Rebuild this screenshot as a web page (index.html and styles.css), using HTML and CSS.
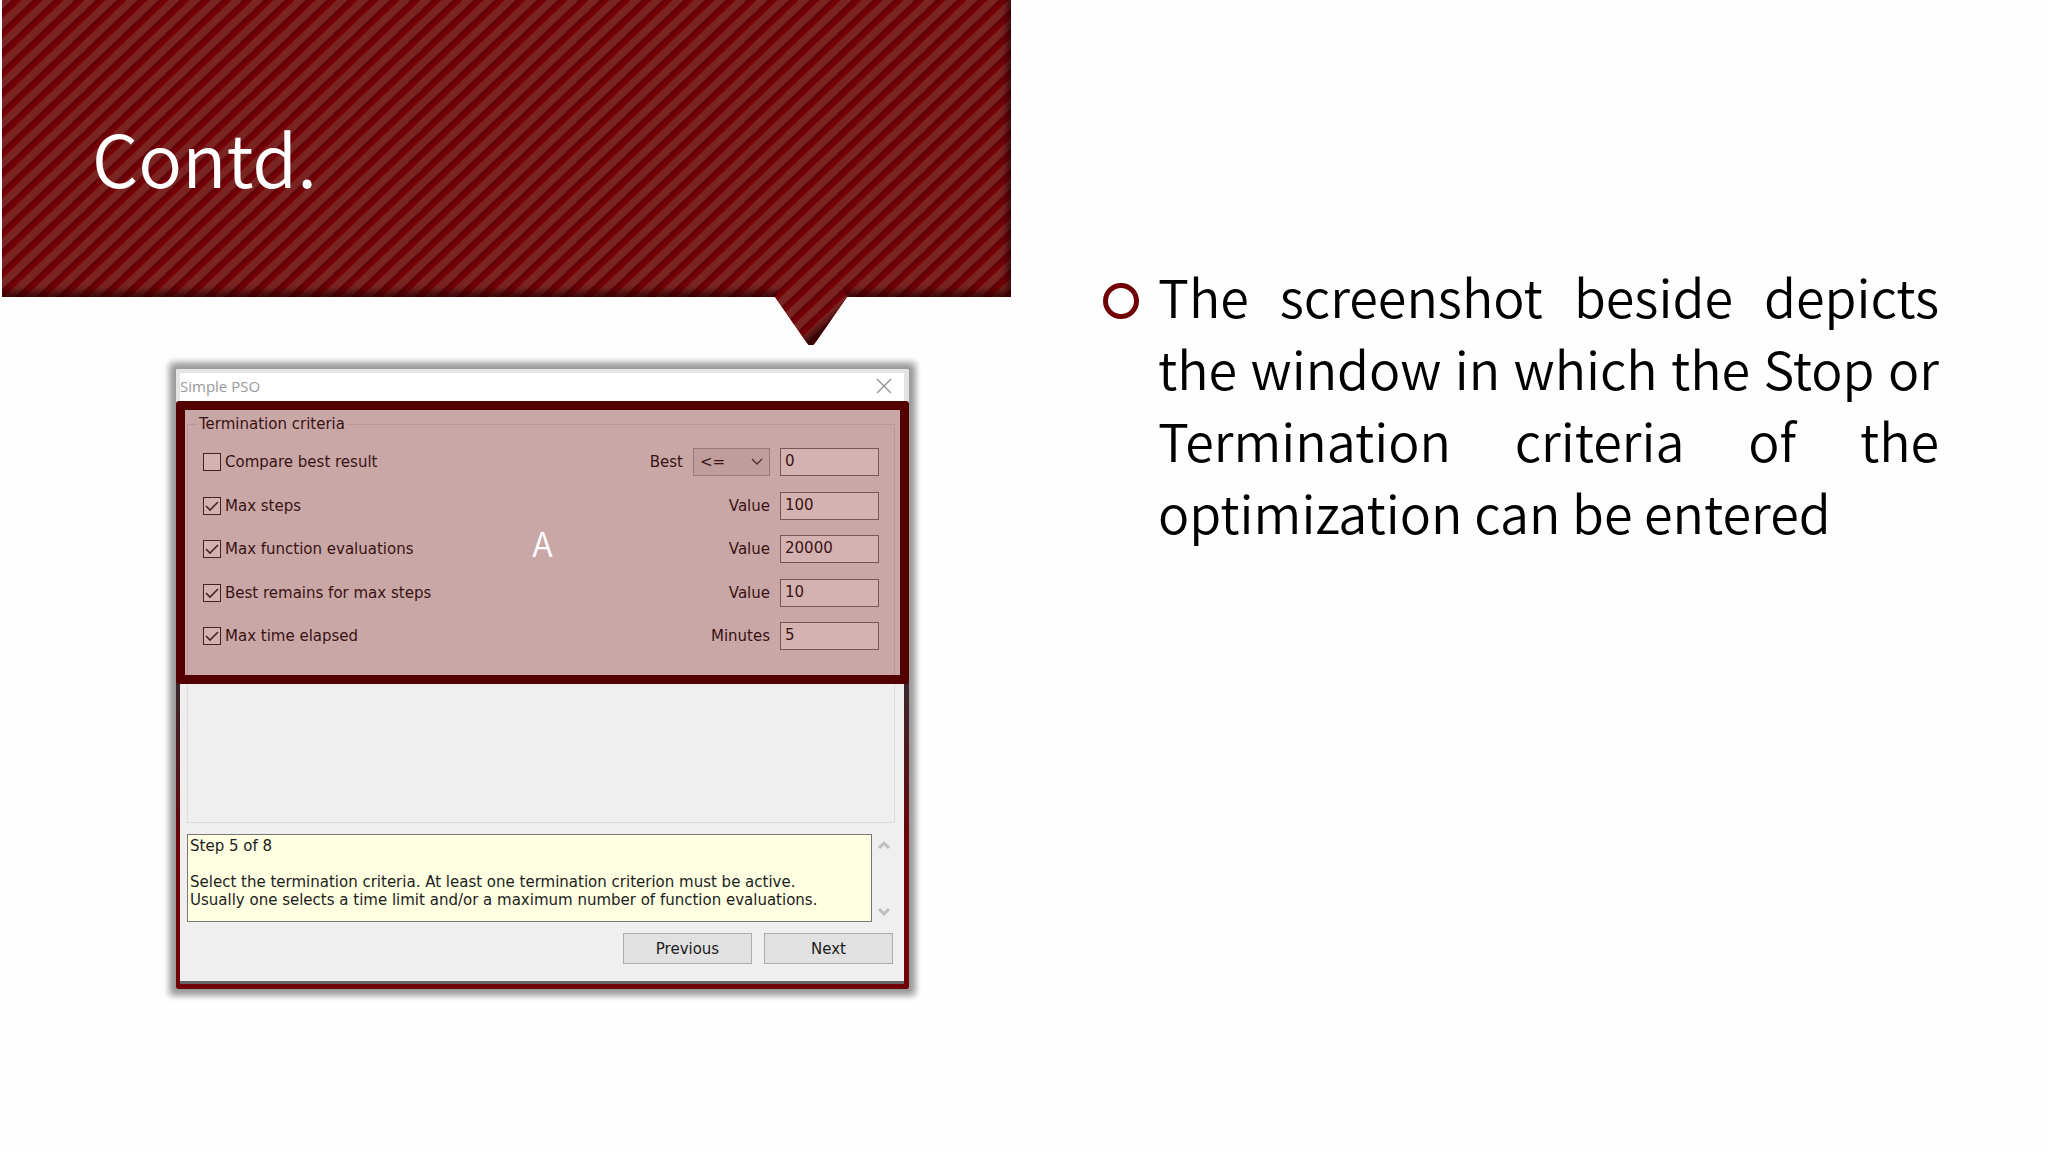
FILE: index.html
```
<!DOCTYPE html>
<html lang="en">
<head>
    <meta charset="UTF-8">
    <meta name="viewport" content="width=device-width, initial-scale=1.0">
    <title>Contd.</title>
    <link rel="stylesheet" href="styles.css">
</head>
<body>
    <main class="slide">
        <section class="left">
            <header class="banner">
                <h1>Contd.</h1>
                <!-- pointer under the banner -->
                <div class="pointer"></div>
            </header>

            <form class="dialog">
                <div class="window">
                    <div class="titlebar">
                        <span>Simple PSO</span>
                        <button type="button" class="close" aria-label="Close">
                            <svg width="16" height="16" viewBox="0 0 16 16"><path d="M1 1L15 15M15 1L1 15" stroke="#8f8f8f" stroke-width="1.3" fill="none"/></svg>
                        </button>
                    </div>

                    <fieldset class="group">
                        <legend>Termination criteria</legend>
                        <div class="rows">
                            <div class="row">
                                <input type="checkbox" id="compare">
                                <label for="compare" class="name">Compare best result</label>
                                <label for="bestOp">Best</label>
                                <select id="bestOp">
                                    <option>&lt;=</option>
                                    <option>&gt;=</option>
                                </select>
                                <input type="text" aria-label="Best value" value="0">
                            </div>
                            <div class="row">
                                <input type="checkbox" id="steps" checked>
                                <label for="steps" class="name">Max steps</label>
                                <label for="stepsValue">Value</label>
                                <input type="text" id="stepsValue" value="100">
                            </div>
                            <div class="row">
                                <input type="checkbox" id="evals" checked>
                                <label for="evals" class="name">Max function evaluations</label>
                                <label for="evalsValue">Value</label>
                                <input type="text" id="evalsValue" value="20000">
                            </div>
                            <div class="row">
                                <input type="checkbox" id="remains" checked>
                                <label for="remains" class="name">Best remains for max steps</label>
                                <label for="remainsValue">Value</label>
                                <input type="text" id="remainsValue" value="10">
                            </div>
                            <div class="row">
                                <input type="checkbox" id="elapsed" checked>
                                <label for="elapsed" class="name">Max time elapsed</label>
                                <label for="elapsedValue">Minutes</label>
                                <input type="text" id="elapsedValue" value="5">
                            </div>
                        </div>
                    </fieldset>

                    <div class="help">
                        <div class="help-text">
                            <p>Step 5 of 8</p>
                            <p>Select the termination criteria. At least one termination criterion must be active.<br>Usually one selects a time limit and/or a maximum number of function evaluations.</p>
                        </div>
                        <div class="scroll">
                            <svg width="12" height="10" viewBox="0 0 12 10"><path d="M1 8L6 3L11 8" stroke="#bdbdbd" stroke-width="3" fill="none"/></svg>
                            <svg width="12" height="10" viewBox="0 0 12 10"><path d="M1 2L6 7L11 2" stroke="#bdbdbd" stroke-width="3" fill="none"/></svg>
                        </div>
                    </div>

                    <div class="buttons">
                        <button type="button">Previous</button>
                        <button type="button">Next</button>
                    </div>
                </div>

                <!-- highlighted area -->
                <div class="marker">A</div>
            </form>
        </section>

        <section class="right">
            <ul>
                <li>The screenshot beside depicts the window in which the Stop or Termination criteria of the optimization can be entered</li>
            </ul>
        </section>
    </main>
</body>
</html>
```
FILE: styles.css
```
*, *::before {
    box-sizing: border-box;
}

body, h1, p, ul, fieldset {
    margin: 0;
    padding: 0;
}

body {
    background-color: #fefefe;
    font-family: "Noto Sans CJK JP", "Open Sans", sans-serif;
    font-weight: 350;
}

.slide {
    display: grid;
    grid-template-columns: 1011fr 1037fr;
    min-height: 100vh;
}

/* Banner */
.banner, .pointer {
    background-color: #700006;
    background-image: linear-gradient(to bottom right, #7a2522 20%, #5c0008 27%, #740006 36%, #740006 44%, #7a2522 50%, #7a2522 70%, #5c0008 77%, #740006 86%, #740006 94%, #7a2522 100%);
    background-size: 21px 20px;
}

.banner {
    position: relative;
    height: 297px;
    margin-left: 2px;
    padding: 102px 90px 0;
    box-shadow: inset -6px -8px 6px -2px rgba(40, 0, 0, 0.7);
}

h1 {
    color: #fff;
    font-size: 73px;
    font-weight: 350;
    line-height: 108px;
}

.pointer {
    position: absolute;
    right: 164px;
    bottom: -48px;
    width: 72px;
    height: 60px;
    background-position: 4px 15px;
    clip-path: polygon(8% 0, 92% 0, 100% 20%, 57% 94%, 53% 100%, 47% 100%, 43% 94%, 0 20%);
}

/* shaded right edge of the pointer */
.pointer::before {
    content: "";
    position: absolute;
    inset: 0;
    background: linear-gradient(to bottom right, transparent 60%, rgba(40, 0, 0, 0.7) 70%);
}

/* Dialog */
.dialog {
    position: relative;
    margin: 72px 102px 0 176px;
    padding: 4px 5px 5px 4px;
    background: linear-gradient(#e4e4e4 40px, #38282c 315px, #6e0006 480px);
    border-radius: 2px;
    box-shadow: 0 0 4px 9px rgba(0, 0, 0, 0.18), 0 0 4px 5px rgba(0, 0, 0, 0.25);
    font: 15px/18px "DejaVu Sans", sans-serif;
    color: #1c1c1c;
}

.window {
    background: #efeff0;
    border-bottom: 3px solid #686468;
}

.titlebar {
    display: flex;
    justify-content: space-between;
    align-items: center;
    height: 28px;
    padding: 0 12px 2px 0;
    background: #fff;
    font-family: "Open Sans", sans-serif;
    color: #999;
}

.close {
    display: flex;
    padding: 0;
    border: none;
    background: none;
}

.group {
    height: 408px;
    margin: 14px 9px 0 7px;
    padding: 0 15px;
    border: 1px solid #dcdcdc;
}

legend {
    margin-left: -6px;
    padding: 0 2px;
}

.rows {
    display: flex;
    flex-direction: column;
    justify-content: space-between;
    height: 202px;
    margin-top: 15px;
}

.row {
    display: flex;
    align-items: center;
    gap: 10px;
}

.name {
    flex: 1;
    margin-left: -6px;
}

input[type="checkbox"] {
    appearance: none;
    width: 18px;
    height: 18px;
    margin: 0;
    border: 1px solid #333;
    background: #fff;
}

input[type="checkbox"]:checked {
    background: #fff url("data:image/svg+xml,%3Csvg xmlns='http://www.w3.org/2000/svg' viewBox='0 0 16 16'%3E%3Cpath d='M2 8L6 12L14 4' fill='none' stroke='%23333' stroke-width='1.6'/%3E%3C/svg%3E");
}

input[type="text"], select {
    height: 28px;
    margin: 0;
    font: inherit;
    color: inherit;
    border-radius: 0;
}

input[type="text"] {
    width: 99px;
    padding: 0 4px 2px;
    border: 1px solid #7a7a7a;
    background: #fff;
}

select {
    appearance: none;
    width: 77px;
    padding: 0 6px;
    border: 1px solid #adadad;
    background: #e1e1e1 url("data:image/svg+xml,%3Csvg xmlns='http://www.w3.org/2000/svg' width='12' height='8' viewBox='0 0 12 8'%3E%3Cpath d='M1 1L6 6L11 1' fill='none' stroke='%23444' stroke-width='1.4'/%3E%3C/svg%3E") no-repeat right 6px center;
}

.help {
    display: flex;
    margin: 11px 11px 0 7px;
}

.help-text {
    flex: 1;
    height: 88px;
    padding: 2px;
    border: 1px solid #777;
    background: #ffffe1;
}

.help-text p + p {
    margin-top: 18px;
}

.scroll {
    display: flex;
    flex-direction: column;
    justify-content: space-between;
    padding: 6px 3px 5px 6px;
}

.buttons {
    display: flex;
    justify-content: flex-end;
    gap: 12px;
    padding: 11px 11px 17px;
}

.buttons button {
    width: 129px;
    height: 31px;
    border: 1px solid #adadad;
    background: #e1e1e1;
    font: inherit;
    color: inherit;
}

.marker {
    position: absolute;
    top: 32px;
    left: 0;
    right: 0;
    height: 283px;
    display: flex;
    justify-content: center;
    align-items: center;
    border: 9px solid #520000;
    border-radius: 3px;
    background: rgba(113, 0, 0, 0.3);
    color: #fff;
    font: 350 34px "Noto Sans CJK JP", sans-serif;
    pointer-events: none;
}

/* Text */
.right {
    padding: 260px 109px 0 92px;
}

ul {
    list-style: none;
}

li {
    position: relative;
    padding-left: 55px;
    font-size: 52px;
    line-height: 72px;
    text-align: justify;
    color: #000;
}

li::before {
    content: "";
    position: absolute;
    left: 0;
    top: 23px;
    width: 36px;
    height: 36px;
    border: 5px solid #700006;
    border-radius: 50%;
}
```
